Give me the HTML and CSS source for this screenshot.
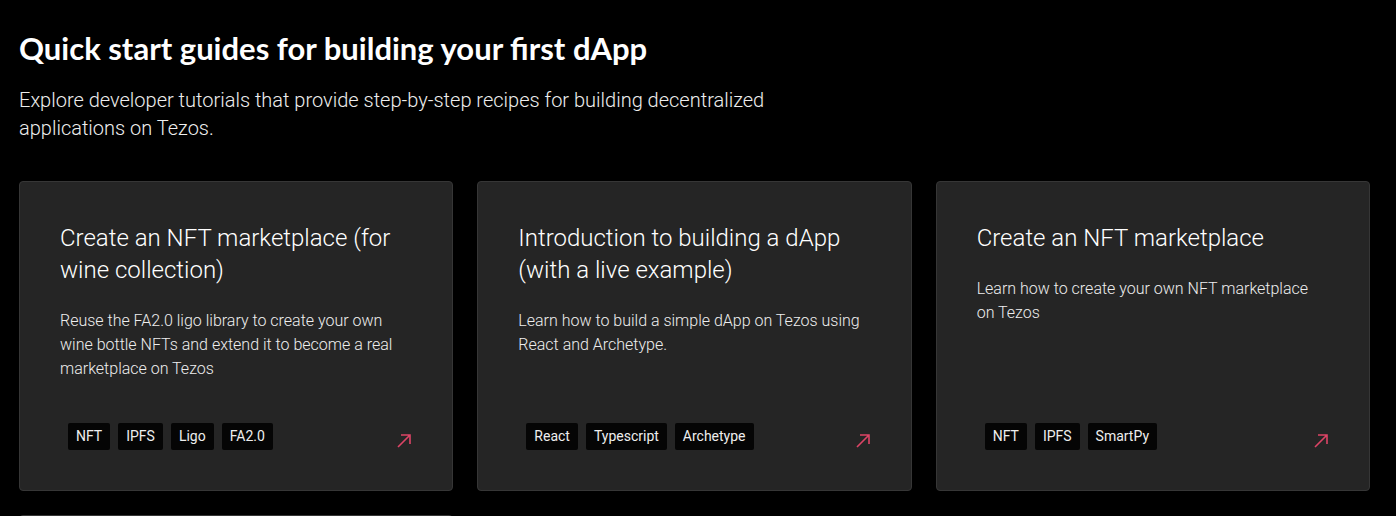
FILE: index.html
```html
<!DOCTYPE html>
<html lang="en">
<head>
  <meta charset="UTF-8">
  <meta name="viewport" content="width=device-width, initial-scale=1.0">
  <title>Quick start guides</title>
  <link rel="stylesheet" href="styles.css">
</head>
<body>
  <section class="guides">
    <h2 class="guides-title">Quick start guides for building your first dApp</h2>
    <p class="guides-intro">Explore developer tutorials that provide step-by-step recipes for building decentralized applications on Tezos.</p>

    <div class="guide-grid">
      <a class="guide-card" href="#">
        <h3 class="guide-name">Create an NFT marketplace (for wine collection)</h3>
        <p class="guide-text">Reuse the FA2.0 ligo library to create your own wine bottle NFTs and extend it to become a real marketplace on Tezos</p>
        <div class="guide-footer">
          <ul class="tags">
            <li>NFT</li>
            <li>IPFS</li>
            <li>Ligo</li>
            <li>FA2.0</li>
          </ul>
          <svg class="arrow" width="16" height="16" viewBox="0 0 16 16"><path d="M2 14 L14 2 M5 2 H14 V11" fill="none" stroke="currentColor" stroke-width="1.6"/></svg>
        </div>
      </a>

      <a class="guide-card" href="#">
        <h3 class="guide-name">Introduction to building a dApp (with a live example)</h3>
        <p class="guide-text">Learn how to build a simple dApp on Tezos using React and Archetype.</p>
        <div class="guide-footer">
          <ul class="tags">
            <li>React</li>
            <li>Typescript</li>
            <li>Archetype</li>
          </ul>
          <svg class="arrow" width="16" height="16" viewBox="0 0 16 16"><path d="M2 14 L14 2 M5 2 H14 V11" fill="none" stroke="currentColor" stroke-width="1.6"/></svg>
        </div>
      </a>

      <a class="guide-card" href="#">
        <h3 class="guide-name">Create an NFT marketplace</h3>
        <p class="guide-text">Learn how to create your own NFT marketplace on Tezos</p>
        <div class="guide-footer">
          <ul class="tags">
            <li>NFT</li>
            <li>IPFS</li>
            <li>SmartPy</li>
          </ul>
          <svg class="arrow" width="16" height="16" viewBox="0 0 16 16"><path d="M2 14 L14 2 M5 2 H14 V11" fill="none" stroke="currentColor" stroke-width="1.6"/></svg>
        </div>
      </a>

      <a class="guide-card" href="#"></a>
    </div>
  </section>
</body>
</html>
```

FILE: styles.css
```css
body {
  margin: 0;
  background-color: #000;
  color: #fff;
  font-family: Roboto, "Liberation Sans", sans-serif;
  overflow: hidden;
}

.guides {
  padding: 30px 26px 0 19px;
}

.guides-title {
  margin: 0;
  font-family: Lato, sans-serif;
  font-size: 31px;
  font-weight: 700;
  line-height: 36px;
}

.guides-intro {
  max-width: 790px;
  margin: 20px 0 0;
  font-size: 20px;
  font-weight: 300;
  line-height: 28px;
  color: #eee;
}

.guide-grid {
  display: grid;
  grid-template-columns: repeat(3, 1fr);
  gap: 24px;
  margin-top: 39px;
}

.guide-card {
  display: flex;
  flex-direction: column;
  height: 228px;
  padding: 40px;
  border: 1px solid #363636;
  border-radius: 4px;
  background-color: #252525;
  color: #fff;
  text-decoration: none;
}

.guide-name {
  margin: 0;
  font-size: 24px;
  font-weight: 300;
  line-height: 32px;
}

.guide-text {
  margin: 23px 0 0;
  font-size: 16px;
  font-weight: 300;
  line-height: 24px;
  color: #eee;
}

.guide-footer {
  display: flex;
  align-items: center;
  justify-content: space-between;
  margin-top: auto;
}

.tags {
  display: flex;
  gap: 8px;
  margin: 0;
  padding: 0 0 0 8px;
  list-style: none;
}

.tags li {
  padding: 0 8px;
  border-radius: 2px;
  background-color: #050505;
  font-size: 14px;
  line-height: 27px;
  color: #eee;
}

.arrow {
  margin: 8px 0 0;
  color: #dd4466;
}
```
